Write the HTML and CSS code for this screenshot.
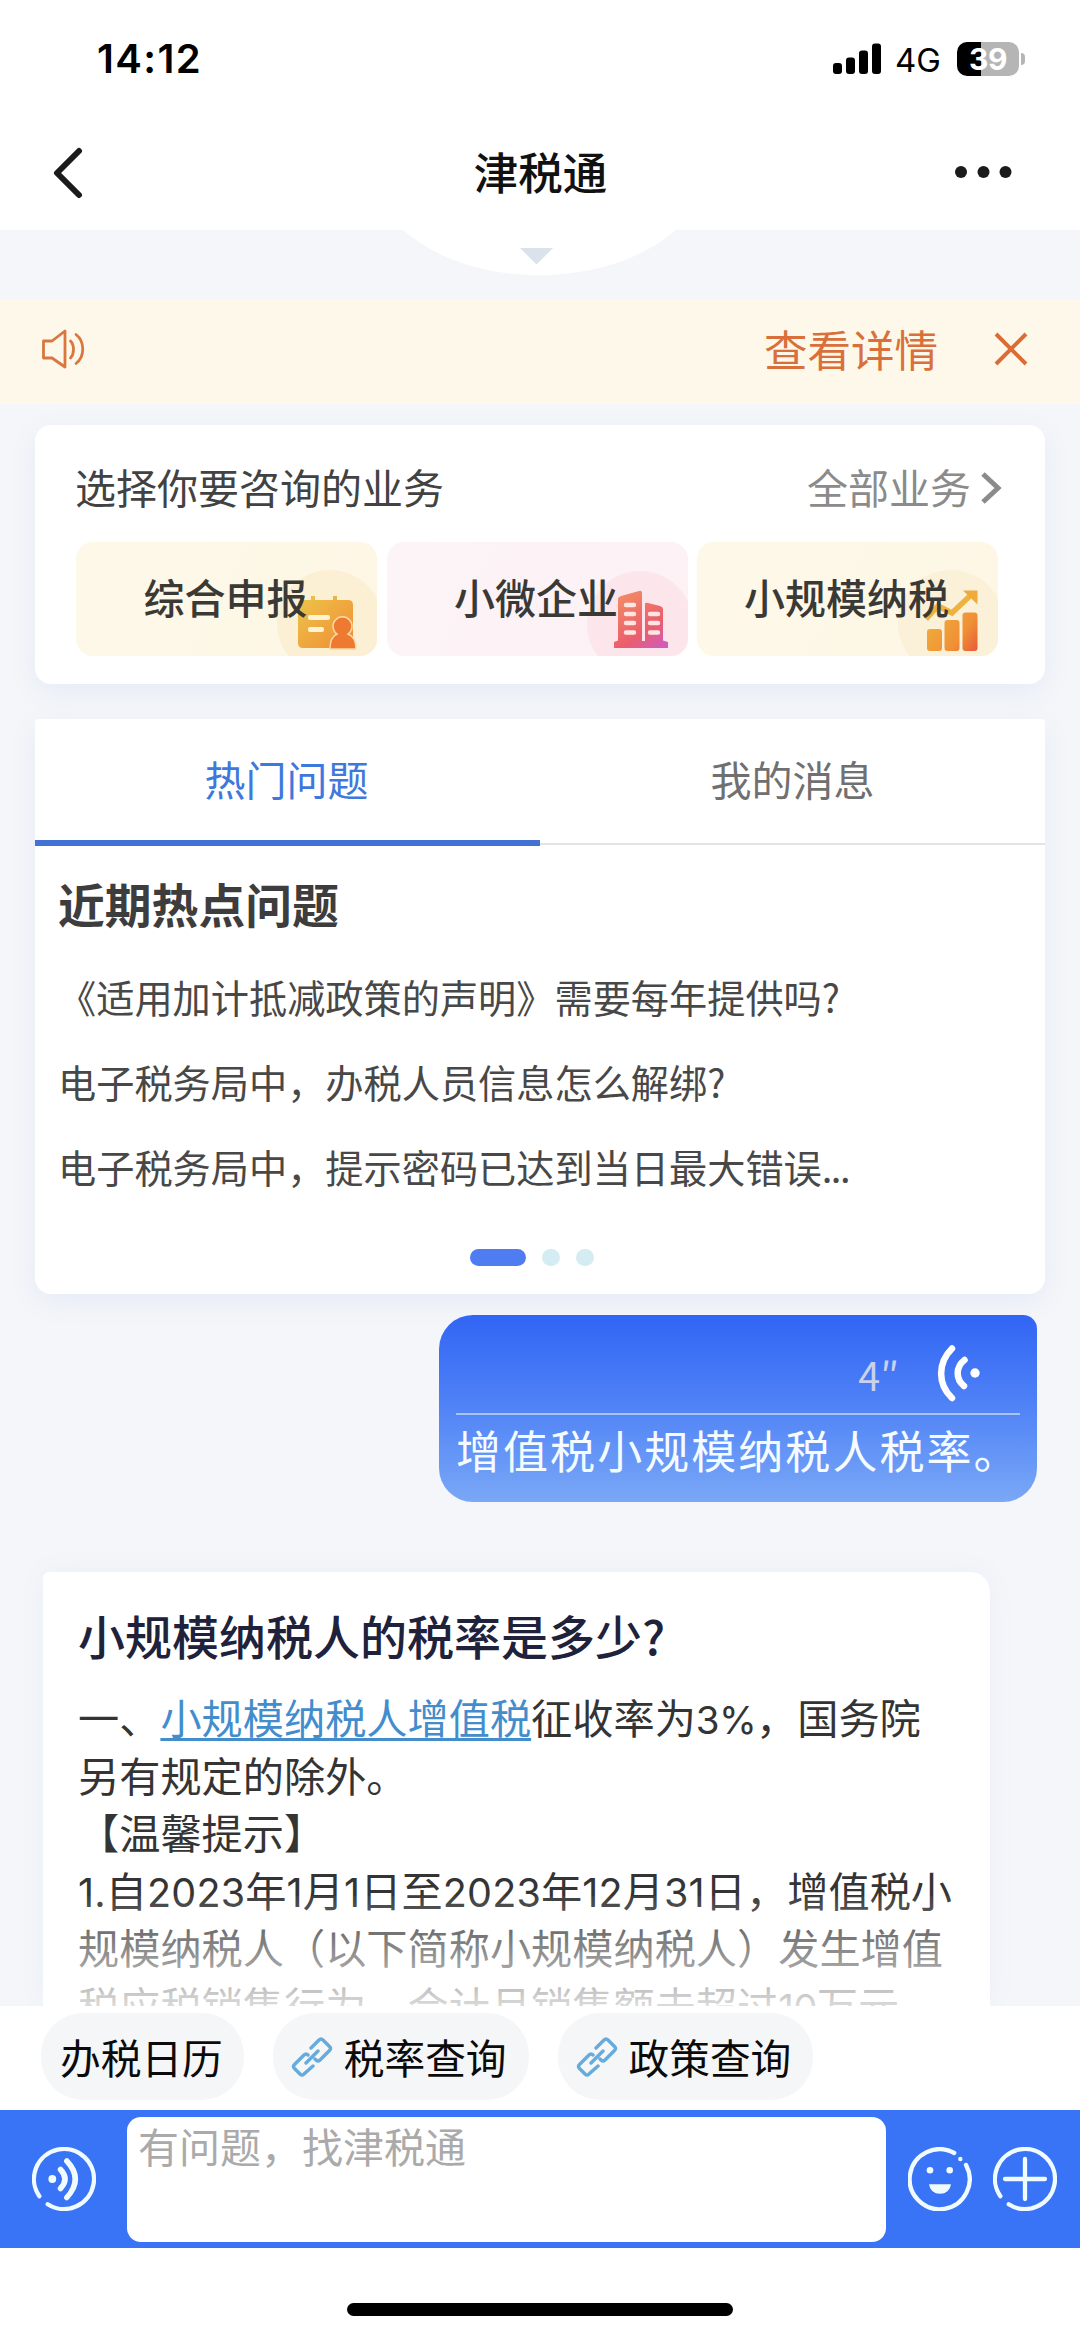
FILE: index.html
```html
<!DOCTYPE html>
<html lang="zh-CN">
<head>
<meta charset="utf-8">
<title>津税通</title>
<link rel="stylesheet" href="styles.css">
</head>
<body>
<div class="app">
  <header class="top">
    <div class="status">
      <span class="time">14:12</span>
      <div class="status-right">
        <svg class="signal" width="48" height="32" viewBox="0 0 48 32"><rect x="0" y="20" width="9" height="11" rx="3"/><rect x="13" y="14.500" width="9" height="16.500" rx="3"/><rect x="26" y="7.500" width="9" height="23.500" rx="3"/><rect x="39" y="0.500" width="9" height="30.500" rx="3"/></svg>
        <span class="net">4G</span>
        <div class="battery"><span class="battery-body">39</span><span class="battery-tip"></span></div>
      </div>
    </div>
    <nav class="nav">
      <svg class="back" width="34" height="56" viewBox="0 0 34 56"><path d="M30 6 8 28l22 22"/></svg>
      <h1 class="nav-title">津税通</h1>
      <svg class="more" width="60" height="16" viewBox="0 0 60 16"><circle cx="8" cy="8" r="6"/><circle cx="30.500" cy="8" r="6"/><circle cx="52.500" cy="8" r="6"/></svg>
    </nav>
  </header>

  <main class="feed">
    <div class="pull">
      <svg width="280" height="46" viewBox="0 0 280 46"><path class="pull-bg" d="M3 0C38 30 86 45 139 45S241 30 276 0z"/><path class="pull-arrow" d="M120 18h33l-16.500 16.500z"/></svg>
    </div>

    <div class="notice">
      <svg class="speaker" width="46" height="44" viewBox="0 0 46 44"><path d="M3.500 14h8.500L25 4v36L12 31H3.500zM30.500 14c4 4 4 13 0 17M36 7.500c9 7 9 22 0 29"/></svg>
      <span class="notice-link">查看详情</span>
      <svg class="close" width="36" height="36" viewBox="0 0 36 36"><path d="M3 3l30 30M33 3 3 33"/></svg>
    </div>

    <section class="card services">
      <div class="services-head">
        <span>选择你要咨询的业务</span>
        <span class="all">全部业务<svg width="22" height="34" viewBox="0 0 22 34"><path d="M3 3l15 14L3 31"/></svg></span>
      </div>
      <div class="tiles">
        <div class="tile gold">
          <svg width="301" height="114" viewBox="0 0 301 114">
            <defs><linearGradient id="g1" x1="0" y1="0" x2="1" y2="1"><stop offset="0" stop-color="#edc64a"/><stop offset="1" stop-color="#f08b34"/></linearGradient></defs>
            <circle cx="254" cy="81" r="53" fill="#fbf0d3"/>
            <path d="M227 58h8v-4h4v4h18v-4h4v4h11q5 0 5 5v43h-50q-5 0-5-5V63q0-5 5-5z" fill="url(#g1)"/>
            <rect x="232" y="73" width="22" height="5" rx="2" fill="#fff3d2"/><rect x="232" y="85" width="16" height="5" rx="2" fill="#fff3d2"/>
            <path d="M254 107q0-12 7-15a9.500 9.500 0 1 1 11 0q8 3 8 15z" fill="#ee7a32" stroke="#fad9a4" stroke-width="1.500"/>
          </svg>
          <span>综合申报</span>
        </div>
        <div class="tile pink">
          <svg width="301" height="114" viewBox="0 0 301 114">
            <defs><linearGradient id="g2" gradientUnits="userSpaceOnUse" x1="238" y1="50" x2="276" y2="106"><stop offset="0" stop-color="#f28a66"/><stop offset=".65" stop-color="#eb5d6d"/><stop offset="1" stop-color="#cf5cc0"/></linearGradient></defs>
            <circle cx="253" cy="82" r="53" fill="#fce6ec"/>
            <path d="M227 106v-6l4-1.500V57q0-2 3-3l18-5q3-1 3 2v48h3V62q0-2 3-1l12 3q3 1 3 3v31.500l5 1.500v6z" fill="url(#g2)"/>
            <path d="M239 63h8M239 72h8M239 81h8M239 90.500h8M263 72h8M263 81h8M263 90.500h8" stroke="#ffe5e2" stroke-width="4.500" stroke-linecap="round"/>
          </svg>
          <span>小微企业</span>
        </div>
        <div class="tile gold">
          <svg width="301" height="114" viewBox="0 0 301 114">
            <defs><linearGradient id="g3" gradientUnits="userSpaceOnUse" x1="230" y1="70" x2="282" y2="108"><stop offset="0" stop-color="#efb23e"/><stop offset=".65" stop-color="#ef9036"/><stop offset="1" stop-color="#e9573a"/></linearGradient></defs>
            <circle cx="254" cy="81" r="53" fill="#fbf0d8"/>
            <path d="M229 77l12-13 14 7 20-19" fill="none" stroke="#eeb23f" stroke-width="5.500"/>
            <path d="M266 48.500h14.500v14z" fill="#eeaa3b"/>
            <g fill="url(#g3)"><rect x="230" y="87" width="15" height="22" rx="3"/><rect x="247.500" y="78" width="15" height="31" rx="3"/><rect x="265.500" y="70.500" width="15" height="38.500" rx="3"/></g>
          </svg>
          <span>小规模纳税</span>
        </div>
      </div>
    </section>

    <section class="card hot">
      <div class="tabs"><span class="tab active">热门问题</span><span class="tab">我的消息</span></div>
      <h2>近期热点问题</h2>
      <ul>
        <li>《适用加计抵减政策的声明》需要每年提供吗?</li>
        <li>电子税务局中，办税人员信息怎么解绑?</li>
        <li>电子税务局中，提示密码已达到当日最大错误<span class="dots">...</span></li>
      </ul>
      <div class="pager"><i class="on"></i><i></i><i></i></div>
    </section>

    <div class="bubble">
      <div class="voice">
        <span>4″</span>
        <svg width="46" height="60" viewBox="0 0 46 60"><path d="M16 5.500C1.500 20 1.500 41 16 55M28.500 17c-9 7-9 19-.5 26"/><circle cx="39" cy="30" r="4.700"/></svg>
      </div>
      <p>增值税小规模纳税人税率。</p>
    </div>

    <article class="answer">
      <h3>小规模纳税人的税率是多少?</h3>
      <p>一、<a>小规模纳税人增值税</a>征收率为<span class="num">3%</span>，国务院<br>另有规定的除外。<br>【温馨提示】<br><span class="dates"><span class="num">1.</span>自<span class="num">2023</span>年<span class="num">1</span>月<span class="num">1</span>日至<span class="num">2023</span>年<span class="num">12</span>月<span class="num">31</span>日</span>，增值税小<br>规模纳税人（以下简称小规模纳税人）发生增值<br>税应税销售行为，合计月销售额未超过<span class="num">10</span>万元</p>
    </article>
  </main>

  <div class="chips">
    <span class="chip">办税日历</span>
    <span class="chip linked"><svg width="42" height="42" viewBox="0 0 42 42"><path d="M20 12l8-8q2-2 4 0l6.500 6.500q2 2 0 4L29 24q-2 2-4 0l-1-1M17 19q-2-2-4 0L3.500 28.500q-2 2 0 4L9 38q2 2 4 0l9-8M15 27l12-12"/></svg>税率查询</span>
    <span class="chip linked"><svg width="42" height="42" viewBox="0 0 42 42"><path d="M20 12l8-8q2-2 4 0l6.500 6.500q2 2 0 4L29 24q-2 2-4 0l-1-1M17 19q-2-2-4 0L3.500 28.500q-2 2 0 4L9 38q2 2 4 0l9-8M15 27l12-12"/></svg>政策查询</span>
  </div>

  <div class="composer">
    <svg width="64" height="64" viewBox="0 0 64 64"><path d="M7.400 49.200A30 30 0 1 1 15.700 57.200"/><path class="thick" d="M28.500 22.500q9 9.500 0 19M34.800 14q17 18 0 36.500"/><circle cx="20.300" cy="32" r="3.900"/></svg>
    <div class="input">有问题，找津税通</div>
    <svg class="smile" width="64" height="64" viewBox="0 0 64 64"><path d="M58 17.900A30 30 0 1 1 46.200 6"/><circle cx="52.300" cy="12" r="2.200"/><circle cx="22" cy="23.300" r="3.300"/><circle cx="41.700" cy="23.300" r="3.300"/><path class="solid" d="M21 37.300h22q-1.500 9.500-11 9.500t-11-9.500z"/></svg>
    <svg width="64" height="64" viewBox="0 0 64 64"><path d="M7.400 49.200A30 30 0 1 1 15.700 57.200M32 12v40M12 32h40"/></svg>
  </div>
  <footer class="home"><span></span></footer>
</div>
</body>
</html>
```
FILE: styles.css
```css
* { box-sizing: border-box; }
body, h1, h2, h3, p, ul { margin: 0; padding: 0; }
body {
  background: #fff;
  color: #3d3d3d;
  font-family: "Noto Sans CJK SC", sans-serif;
  font-size: 41.2px;
}
svg { display: block; flex: none; }
ul { list-style: none; }

.app { display: flex; flex-direction: column; width: 1080px; height: 2337px; overflow: hidden; }

.top { height: 230px; flex: none; }
.status { display: flex; justify-content: space-between; height: 116px; padding: 2px 55px 0 97px; align-items: center; color: #000; font-family: Inter, sans-serif; }
.time { font-size: 40px; font-weight: 600; line-height: 48px; letter-spacing: 1.400px; }
.status-right { display: flex; align-items: center; }
.net { margin-left: 14px; width: 45px; font-size: 33px; line-height: 40px; padding-top: 2px; }
.battery { display: flex; align-items: center; margin-left: 17px; gap: 2px; }
.battery-body { width: 62px; height: 34px; border-radius: 10px; background: linear-gradient(90deg, #000 24px, #b5b5b5 24px); color: #fff; font-size: 30px; font-weight: 700; line-height: 34px; text-align: center; letter-spacing: -0.500px; }
.battery-tip { width: 4px; height: 12px; border-radius: 0 4px 4px 0; background: #b5b5b5; }

.nav { display: grid; grid-template-columns: 100px 1fr 100px; align-items: center; height: 114px; padding: 0 32px 0 49px; }
.back path { fill: none; stroke: #1b1b1b; stroke-width: 6; stroke-linecap: round; stroke-linejoin: round; }
.nav-title { padding: 0 16px 5px 0; text-align: center; color: #111; font-size: 44.500px; font-weight: 500; line-height: 60px; }
.more { margin: 0 0 2px 5px; fill: #1b1b1b; }

.feed { display: flex; flex-direction: column; height: 1776px; flex: none; overflow: hidden; background: #f4f6f9; }
.pull { height: 70px; flex: none; padding-left: 400px; }
.pull-bg { fill: #fff; }
.pull-arrow { fill: #dbe2ec; }

.notice { display: flex; align-items: center; height: 104px; flex: none; padding: 0 51px 6px 40px; background: #fdf8ea; color: #d9703b; }
.speaker path { fill: none; stroke: #d9773f; stroke-width: 2.800; stroke-linejoin: round; stroke-linecap: round; }
.notice-link { margin-left: auto; font-size: 43.500px; line-height: 60px; }
.close { margin-left: 55px; }
.close path { stroke: #dc6c36; stroke-width: 4; }

.card { flex: none; margin: 0 35px; background: #fff; box-shadow: 0 8px 28px rgba(90, 120, 220, .09); }
.services { height: 259px; margin-top: 21px; padding: 30px 47px 0 41px; border-radius: 16px; }
.services-head { display: flex; justify-content: space-between; height: 62px; line-height: 62px; font-size: 41px; color: #424242; }
.services-head span:first-child { margin-left: -1px; }
.all { display: flex; align-items: center; gap: 9px; margin-right: -4px; color: #8b8b8b; }
.all svg { margin-top: 4px; }
.all path { fill: none; stroke: #8b8b8b; stroke-width: 5; }
.tiles { display: grid; grid-template-columns: repeat(3, 301px); justify-content: space-between; margin-top: 25px; }
.tile { position: relative; height: 114px; border-radius: 17px; overflow: hidden; text-align: center; font-size: 41px; font-weight: 500; line-height: 109px; color: #3b3935; }
.tile svg { position: absolute; inset: 0; }
.tile span { position: relative; margin-right: 2px; }
.gold { background: linear-gradient(120deg, #fdf9e9, #fdf6e5); }
.pink { background: linear-gradient(120deg, #fcf4f8, #fdf1f4); }

.hot { height: 575px; margin-top: 35px; border-radius: 4px 4px 16px 16px; }
.tabs { display: grid; grid-template-columns: 1fr 1fr; height: 127px; }
.tab { height: 126px; padding-top: 29px; border-bottom: 2px solid #e2e4e8; text-align: center; font-size: 41px; line-height: 60px; color: #707070; }
.tab.active { height: 127px; padding-right: 2px; border-bottom: 6px solid #4272d4; color: #3f78dc; }
.hot h2 { padding: 25px 23px 0; font-size: 46.800px; font-weight: 700; line-height: 64px; color: #3d3d3d; }
.hot ul { padding: 19px 23px 0; }
.hot li { height: 85px; font-size: 38.200px; line-height: 85px; color: #484848; white-space: nowrap; }
.dots { letter-spacing: -1.500px; }
.pager { display: flex; gap: 16px; margin: 40px 0 0 435px; }
.pager i { width: 18px; height: 17px; border-radius: 9px; background: #d4edf3; }
.pager .on { width: 56px; background: #4f7df1; }

.bubble { flex: none; width: 598px; height: 187px; margin: 21px 43px 0 auto; padding: 0 17px; border-radius: 34px 14px 34px 34px; background: linear-gradient(#3165f4, #4d80f6 45%, #7aa8f6); color: #f4fcff; }
.voice { display: flex; justify-content: flex-end; height: 100px; padding: 28px 38px 0 0; border-bottom: 2px solid #a9c4f4; color: #c8d2ea; font-size: 39.500px; line-height: 62px; }
.voice svg { margin: 0 0 0 37px; }
.voice path { fill: none; stroke: #fff; stroke-width: 6.500; stroke-linecap: round; }
.voice circle { fill: #fff; }
.bubble p { font-size: 45px; letter-spacing: 2.050px; line-height: 69px; white-space: nowrap; }

.answer { position: relative; flex: none; width: 947px; height: 434px; margin: 70px 0 0 43px; padding: 31px 0 0 35px; border-radius: 6px 20px 0 0; background: #fff; overflow: hidden; box-shadow: 0 0 28px rgba(90, 120, 220, .06); }
.answer h3 { font-size: 47px; font-weight: 500; line-height: 64px; color: #20223c; }
.answer p { margin-top: 21px; font-size: 41.200px; line-height: 57.600px; color: #343434; white-space: nowrap; }
.answer a { color: #438dcc; text-decoration: underline; text-decoration-thickness: 3px; text-underline-offset: 4px; }
.num { font-family: Inter, sans-serif; font-size: 38.500px; line-height: 0; letter-spacing: -0.700px; }
.dates .num { font-size: 39.500px; letter-spacing: 0.200px; }
.answer::after { content: ""; position: absolute; left: 0; right: 0; bottom: 0; height: 110px; background: linear-gradient(rgba(255, 255, 255, .05), rgba(255, 255, 255, .82)); }

.chips { display: flex; gap: 29px; height: 104px; flex: none; padding: 7px 41px; }
.chip { display: flex; align-items: center; height: 87px; padding: 0 21px 0 19px; border-radius: 42px; background: #f4f6f8; color: #0b0b0b; font-size: 40.700px; }
.linked { padding: 0 22px 0 18px; gap: 11px; }
.chip svg path { fill: none; stroke: #67abdc; stroke-width: 3.400; stroke-linecap: round; }

.composer { display: flex; align-items: center; height: 138px; flex: none; padding: 0 23px 0 32px; background: #3974f6; }
.composer path { fill: none; stroke: #f0fbff; stroke-width: 4.300; stroke-linecap: round; }
.composer .thick { stroke-width: 5.500; }
.composer circle, .composer .solid { fill: #f0fbff; }
.composer .solid { stroke: none; }
.input { width: 759px; height: 125px; margin-left: 31px; padding-left: 11px; border-radius: 14px; background: #fff; color: #aaa; font-size: 41px; line-height: 56px; }
.smile { margin: 0 21px 0 22px; }

.home { flex: 1; display: flex; justify-content: center; padding-top: 55px; }
.home span { width: 386px; height: 13px; border-radius: 7px; background: #000; }
```
